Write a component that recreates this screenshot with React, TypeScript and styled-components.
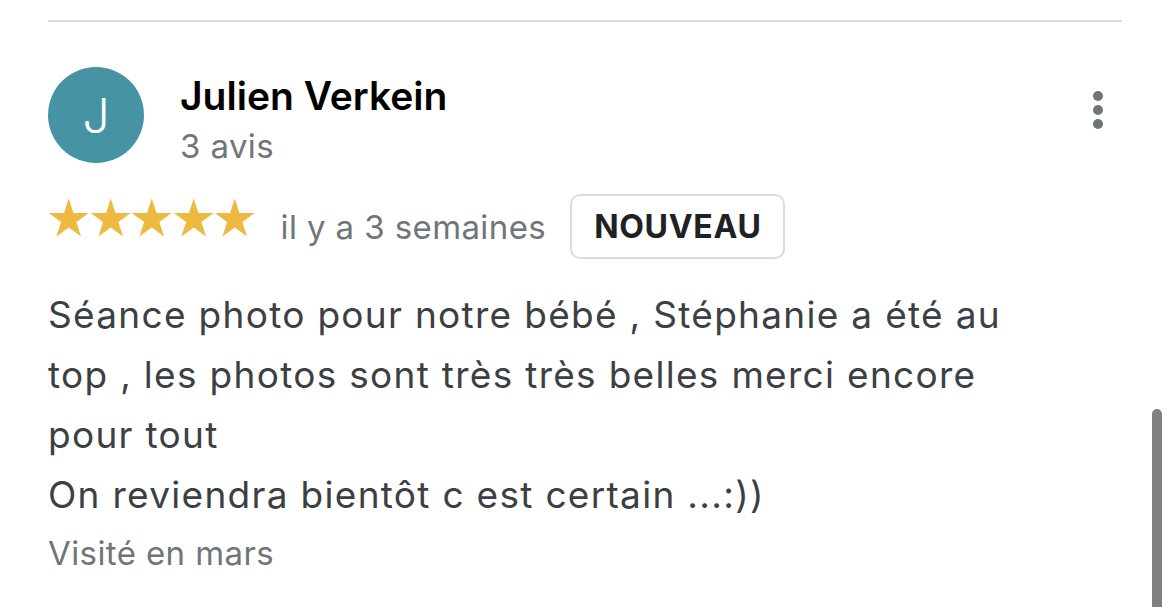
import React from "react";
import styled, { createGlobalStyle } from "styled-components";

const GlobalStyle = createGlobalStyle`
  html, body {
    margin: 0;
    padding: 0;
    background: #ffffff;
  }
  body {
    font-family: Inter, "Liberation Sans", Arial, sans-serif;
    -webkit-font-smoothing: antialiased;
  }
`;

const Page = styled.div`
  position: relative;
  height: 607px;
  overflow: hidden;
  padding: 20px 48px 0 48px;
  box-sizing: border-box;
`;

const Divider = styled.div`
  height: 2px;
  background: #dadce0;
`;

const Header = styled.div`
  display: flex;
  align-items: flex-start;
  margin-top: 45px;
`;

const Avatar = styled.div`
  width: 96px;
  height: 96px;
  border-radius: 50%;
  background: #4694a3;
  color: #ffffff;
  display: flex;
  align-items: center;
  justify-content: center;
  font-size: 48px;
  font-weight: 300;
  flex-shrink: 0;
`;

const NameBlock = styled.div`
  margin-left: 36px;
  display: flex;
  flex-direction: column;
`;

const Name = styled.div`
  font-size: 39px;
  font-weight: 600;
  color: #000000;
  line-height: 46px;
  margin-top: 6px;
`;

const Meta = styled.div`
  font-size: 33px;
  color: #70757a;
  line-height: 40px;
  letter-spacing: 0.4px;
`;

const Reviews = styled(Meta)`
  margin-top: 7px;
`;

const Kebab = styled.div`
  margin-left: auto;
  margin-right: 19px;
  margin-top: 24px;
  display: flex;
  flex-direction: column;
  gap: 4px;
`;

const Dot = styled.span`
  width: 10px;
  height: 10px;
  border-radius: 50%;
  background: #70757a;
`;

const RatingRow = styled.div`
  display: flex;
  align-items: center;
  margin-top: 28px;
`;

const Stars = styled.div`
  display: flex;
  align-items: center;
  margin-bottom: 16px;
`;

const StarIcon = styled.svg`
  width: 41.5px;
  height: 41px;
  display: block;
`;

const Time = styled(Meta)`
  margin-left: 25px;
`;

const Badge = styled.div`
  margin-left: 24px;
  height: 65px;
  box-sizing: border-box;
  padding: 0 21px 0 22px;
  border: 2px solid #dadce0;
  border-radius: 10px;
  display: flex;
  align-items: center;
  font-size: 32px;
  font-weight: 700;
  color: #202124;
  letter-spacing: 0.7px;
`;

const Body = styled.p`
  margin: 26px 0 0 0;
  font-size: 37px;
  line-height: 60px;
  letter-spacing: 1.3px;
  color: #3c4043;
  white-space: pre-line;
  max-width: 1000px;
`;

const Visit = styled(Meta)`
  margin-top: 8px;
`;

const Scrollbar = styled.div`
  position: absolute;
  right: 8px;
  top: 409px;
  bottom: 0;
  width: 10px;
  border-radius: 5px 5px 0 0;
  background: #808080;
`;

const Star = () => (
  <StarIcon viewBox="0 0 42 42">
    <polygon
      fill="#eeb940"
      points="21,0.5 25.82,15.37 41.45,15.36 28.8,24.53 33.64,39.39 21,30.2 8.36,39.39 13.2,24.53 0.55,15.36 16.18,15.37"
    />
  </StarIcon>
);

export default function App() {
  return (
    <>
      <GlobalStyle />
      <Page>
        <Divider />
        <Header>
          <Avatar>J</Avatar>
          <NameBlock>
            <Name>Julien Verkein</Name>
            <Reviews>3 avis</Reviews>
          </NameBlock>
          <Kebab>
            <Dot />
            <Dot />
            <Dot />
          </Kebab>
        </Header>
        <RatingRow>
          <Stars>
            <Star />
            <Star />
            <Star />
            <Star />
            <Star />
          </Stars>
          <Time>il y a 3 semaines</Time>
          <Badge>NOUVEAU</Badge>
        </RatingRow>
        <Body>
          {"Séance photo pour notre bébé , Stéphanie a été au top , les photos sont très très belles merci encore pour tout\nOn reviendra bientôt c est certain ...:))"}
        </Body>
        <Visit>Visité en mars</Visit>
        <Scrollbar />
      </Page>
    </>
  );
}
